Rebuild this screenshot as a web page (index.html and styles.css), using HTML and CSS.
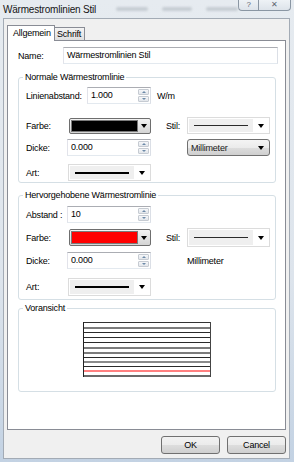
FILE: index.html
```html
<!DOCTYPE html>
<html lang="de">
<head>
  <meta charset="UTF-8">
  <title>Wärmestromlinien Stil</title>
  <link rel="stylesheet" href="styles.css">
</head>
<body>
  <div class="window">
    <div class="titlebar">
      <span class="title">Wärmestromlinien Stil</span>
      <span class="blob b1"></span>
      <span class="blob b2"></span>
      <span class="blob b3"></span>
      <div class="caption">
        <span class="cap-btn help">?</span>
        <span class="cap-btn close">✕</span>
      </div>
    </div>

    <div class="client">
      <div class="tabs">
        <div class="tab active">Allgemein</div>
        <div class="tab">Schrift</div>
      </div>

      <div class="panel">
        <div class="name-row">
          <span class="name-label">Name:</span>
          <div class="textbox">Wärmestromlinien Stil</div>
        </div>

        <fieldset class="group g1">
          <legend>Normale Wärmestromlinie</legend>
          <div class="abst-row">
            <span class="abst-label">Linienabstand:</span>
            <div class="spin short"><span class="val">1.000</span><span class="spinbtns"><i class="up"></i><i class="down"></i></span></div>
            <span class="unit">W/m</span>
          </div>
          <div class="row r-farbe">
            <span>Farbe:</span>
            <div class="colorpick"><span class="swatch black"></span><span class="arr"><b class="tri"></b></span></div>
            <span></span>
            <span>Stil:</span>
            <div class="linecombo"><span class="linepart"><i class="thin"></i></span><span class="arr"><b class="tri"></b></span></div>
          </div>
          <div class="row r-dicke">
            <span>Dicke:</span>
            <div class="spin"><span class="val">0.000</span><span class="spinbtns"><i class="up"></i><i class="down"></i></span></div>
            <span></span>
            <span></span>
            <div class="dropdown"><span>Millimeter</span><b class="tri"></b></div>
          </div>
          <div class="row r-art">
            <span>Art:</span>
            <div class="linecombo"><span class="linepart"><i class="thick"></i></span><span class="arr"><b class="tri"></b></span></div>
          </div>
        </fieldset>

        <fieldset class="group g2">
          <legend>Hervorgehobene Wärmestromlinie</legend>
          <div class="row r-abstand">
            <span>Abstand :</span>
            <div class="spin"><span class="val">10</span><span class="spinbtns"><i class="up"></i><i class="down"></i></span></div>
          </div>
          <div class="row r-farbe2">
            <span>Farbe:</span>
            <div class="colorpick"><span class="swatch red"></span><span class="arr"><b class="tri"></b></span></div>
            <span></span>
            <span>Stil:</span>
            <div class="linecombo"><span class="linepart"><i class="thin"></i></span><span class="arr"><b class="tri"></b></span></div>
          </div>
          <div class="row r-dicke2">
            <span>Dicke:</span>
            <div class="spin"><span class="val">0.000</span><span class="spinbtns"><i class="up"></i><i class="down"></i></span></div>
            <span></span>
            <span></span>
            <span class="mm">Millimeter</span>
          </div>
          <div class="row r-art2">
            <span>Art:</span>
            <div class="linecombo"><span class="linepart"><i class="thick"></i></span><span class="arr"><b class="tri"></b></span></div>
          </div>
        </fieldset>

        <fieldset class="group g3">
          <legend>Voransicht</legend>
          <svg class="preview" width="128" height="55" viewBox="0 0 128 55" shape-rendering="crispEdges">
            <rect x="0" y="0" width="128" height="55" fill="#fff"/>
            <rect x="0" y="5" width="128" height="2" fill="#7c7c7c"/>
            <rect x="0" y="10" width="128" height="1" fill="#2b2b2b"/>
            <rect x="0" y="15" width="128" height="1" fill="#2b2b2b"/>
            <rect x="0" y="20" width="128" height="1" fill="#2b2b2b"/>
            <rect x="0" y="25" width="128" height="2" fill="#7c7c7c"/>
            <rect x="0" y="30" width="128" height="2" fill="#7c7c7c"/>
            <rect x="0" y="35" width="128" height="1" fill="#2b2b2b"/>
            <rect x="0" y="39" width="128" height="2" fill="#8a8a8a"/>
            <rect x="0" y="44" width="128" height="1" fill="#2b2b2b"/>
            <rect x="0" y="48" width="128" height="2" fill="#ff8080"/>
            <rect x="0" y="53" width="128" height="2" fill="#6a6a6a"/>
            <rect x="0" y="0" width="128" height="1" fill="#333"/>
            <rect x="0" y="0" width="1" height="55" fill="#222"/>
            <rect x="127" y="0" width="1" height="55" fill="#444"/>
          </svg>
        </fieldset>
      </div>

      <div class="buttons">
        <button class="btn">OK</button>
        <button class="btn">Cancel</button>
      </div>
    </div>
  </div>
</body>
</html>
```

FILE: styles.css
```css
* {
  box-sizing: border-box;
}
body {
  margin: 0;
  width: 294px;
  height: 462px;
  overflow: hidden;
  font-family: "Liberation Sans", Arial, sans-serif;
  font-size: 9px;
  letter-spacing: -0.2px;
  color: #000;
  background: linear-gradient(to bottom, #e6ebf0 0%, #dde4ec 60%, #c3d2e3 100%);
}
.window {
  height: 462px;
  display: flex;
  flex-direction: column;
}

/* title bar */
.titlebar {
  height: 18px;
  display: flex;
  align-items: center;
  padding-left: 3px;
  white-space: nowrap;
}
.title {
  flex-shrink: 0;
  font-size: 10px;
  color: #151515;
}
/* blurred menu of the window behind */
.blob {
  height: 4px;
  background: #c7cdd4;
  border-radius: 2px;
  filter: blur(1.2px);
}
.b1 { width: 34px; margin-left: 20px; }
.b2 { width: 32px; margin-left: 14px; }
.b3 { width: 34px; margin-left: 14px; }
.caption {
  flex-shrink: 0;
  margin-left: auto;
  margin-right: 3px;
  align-self: flex-start;
  display: flex;
  height: 11px;
}
.cap-btn {
  height: 11px;
  border: 1px solid #8a96a3;
  border-top: none;
  background: linear-gradient(#eef2f6, #dde3ea);
  color: #5d6670;
  font-size: 8px;
  line-height: 10px;
  text-align: center;
}
.help {
  width: 20px;
  border-radius: 0 0 0 4px;
  border-right: none;
}
.close {
  width: 33px;
  border-radius: 0 0 4px 0;
}

/* dialog body */
.client {
  flex: 1;
  margin: 0 4px 3px 3px;
  border: 1px solid #a3abb5;
  background: #f0f0f0;
  display: flex;
  flex-direction: column;
}
.tabs {
  display: flex;
  align-items: flex-end;
  height: 15px;
  margin: 6px 0 0 3px;
}
.tab {
  width: 30px;
  height: 13px;
  border: 1px solid #898c95;
  border-left: none;
  border-bottom: none;
  background: linear-gradient(#f4f4f4, #dfdfdf);
  line-height: 12px;
  padding-left: 2px;
}
.tab.active {
  width: 48px;
  height: 16px;
  margin-bottom: -1px;
  border-left: 1px solid #898c95;
  background: #fff;
  line-height: 14px;
  padding-left: 5px;
  position: relative;
  z-index: 1;
}
.panel {
  height: 390px;
  margin: 0 3px;
  border: 1px solid #898c95;
  background: #fff;
  padding: 6px 9px 0 10px;
}

.name-row {
  display: flex;
  align-items: center;
  height: 17px;
  margin-right: -2px;
}
.name-label {
  width: 45px;
}
.textbox {
  flex: 1;
  height: 17px;
  border: 1px solid #abadb3;
  border-color: #abadb3 #dbdfe6 #e3e9ef #e2e3ea;
  padding-left: 3px;
  line-height: 15px;
}

/* group boxes */
.group {
  margin: 7px 0 0;
  border: 1px solid #d5dfe5;
  border-radius: 3px;
  min-width: 0;
}
.group legend {
  line-height: 12px;
  padding: 0 2px;
  margin-left: -3px;
}
.g1 {
  padding: 4px 0 1px 7px;
}
.g2 {
  margin-top: 6px;
  padding: 5px 0 3px 7px;
}
.g3 {
  margin-top: 2px;
  padding: 8px 0 14px 0;
}
.g3 legend {
  margin-left: 4px;
}
.preview {
  display: block;
  margin: 0 auto;
}

.row {
  display: grid;
  grid-template-columns: 41px 84px 15px 21px 83px;
  align-items: center;
  height: 17px;
}
.abst-row {
  display: flex;
  align-items: center;
  height: 17px;
}
.abst-label {
  width: 61px;
}
.unit {
  margin-left: 6px;
}
.r-farbe { margin-top: 13px; }
.r-dicke { margin-top: 5px; }
.r-art { margin-top: 8px; }
.r-farbe2 { margin-top: 5px; height: 19px; }
.r-dicke2 { margin-top: 5px; }
.r-art2 { margin-top: 9px; height: 18px; }

/* spin box */
.spin {
  display: flex;
  height: 17px;
  border: 1px solid #abadb3;
  border-color: #abadb3 #dbdfe6 #e3e9ef #e2e3ea;
  background: #fff;
}
.spin.short {
  width: 64px;
}
.spin .val {
  flex: 1;
  padding-left: 3px;
  line-height: 15px;
}
.spinbtns {
  width: 12px;
  display: flex;
  flex-direction: column;
  gap: 1px;
  padding: 1px 1px 1px 0;
}
.spinbtns i {
  flex: 1;
  border: 1px solid #c6cbd2;
  border-radius: 1px;
  background: linear-gradient(#f6f7f9, #e2e6eb);
  display: flex;
  align-items: center;
  justify-content: center;
}
.spinbtns i::after {
  content: "";
  border-left: 2px solid transparent;
  border-right: 2px solid transparent;
}
.spinbtns .up::after {
  border-bottom: 2px solid #6d8aa8;
}
.spinbtns .down::after {
  border-top: 2px solid #6d8aa8;
}

/* colour picker */
.colorpick {
  display: flex;
  height: 16px;
  margin-left: 2px;
  width: 82px;
  border: 1px solid #6e6e6e;
  border-radius: 2px;
  padding: 1px;
  background: linear-gradient(#f3f3f3, #d4d4d4);
}
.r-farbe2 .colorpick {
  height: 17px;
}
.swatch {
  flex: 1;
  border: 1px solid #7a7a7a;
}
.swatch.black { background: #000; }
.swatch.red { background: #ff0000; }
.colorpick .arr {
  width: 11px;
  display: flex;
  align-items: center;
  justify-content: center;
}
.tri {
  display: block;
  width: 0;
  height: 0;
  border-left: 3.5px solid transparent;
  border-right: 3.5px solid transparent;
  border-top: 4px solid #000;
}

/* line style combo */
.linecombo {
  display: flex;
  height: 17px;
  border: 1px solid #dcdcdc;
  background: #fff;
  padding: 1px;
}
.r-art .linecombo,
.r-art2 .linecombo {
  margin-left: 1px;
}
.r-farbe2 .linecombo {
  height: 19px;
}
.r-art2 .linecombo {
  height: 18px;
}
.linepart {
  flex: 1;
  background: #efefef;
  display: flex;
  align-items: center;
  padding: 0 5px;
}
.linepart i {
  flex: 1;
  background: #2a2a2a;
}
.linepart .thin { height: 1px; }
.linepart .thick { height: 2px; background: #000; }
.linecombo .arr {
  width: 15px;
  display: flex;
  align-items: center;
  justify-content: center;
}

/* unit dropdown */
.dropdown {
  display: flex;
  align-items: center;
  height: 17px;
  border: 1px solid #707070;
  border-radius: 3px;
  background: linear-gradient(#f4f4f4 0%, #ebebeb 50%, #dddddd 51%, #cfcfcf 100%);
  padding: 0 5px 0 3px;
  color: #1a1a1a;
}
.dropdown span {
  flex: 1;
}
.mm {
  white-space: nowrap;
}

/* buttons */
.buttons {
  display: flex;
  justify-content: flex-end;
  gap: 7px;
  padding: 6px 3px 0 0;
}
.btn {
  width: 59px;
  height: 18px;
  border: 1px solid #707070;
  border-radius: 3px;
  background: linear-gradient(#f2f2f2 0%, #ebebeb 50%, #dddddd 51%, #cfcfcf 100%);
  font-family: "Liberation Sans", Arial, sans-serif;
  font-size: 9px;
  letter-spacing: -0.2px;
  color: #000;
  padding: 0;
}
```
